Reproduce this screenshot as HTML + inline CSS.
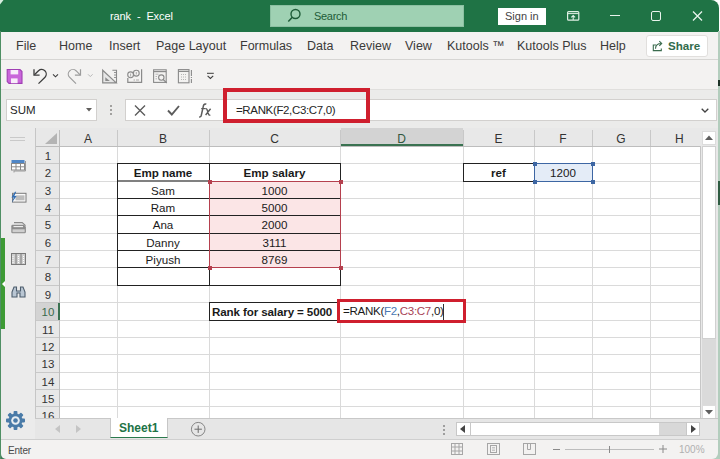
<!DOCTYPE html>
<html><head><meta charset="utf-8">
<style>
*{margin:0;padding:0;box-sizing:border-box}
html,body{width:720px;height:459px;overflow:hidden;background:#fff}
body{position:relative;font-family:"Liberation Sans",sans-serif;color:#262626}
.a{position:absolute}
.t{position:absolute;white-space:pre;line-height:1}
#title{left:0;top:0;width:719px;height:32px;background:#1f7345;border-top-right-radius:8px}
#ribbon{left:0;top:32px;width:718px;height:28px;background:#f3f2f1;border-bottom:1px solid #d6d5d3}
#qat{left:0;top:60px;width:718px;height:30px;background:#f3f2f1}
#fbar{left:0;top:90px;width:718px;height:38px;background:#ebebea}
.tab{font-size:12.5px;color:#3b3a39;top:40px}
.hl{position:absolute;height:1px;background:#dadada}
.vl{position:absolute;width:1px;background:#dadada}
.ch{font-size:12px;color:#333;top:132px}
.rh{font-size:11.5px;color:#333;width:24px;text-align:center}
.cell{font-size:11.6px;position:absolute;text-align:center;white-space:pre;line-height:17px;color:#1a1a1a;margin-top:0.4px}
.cell.b{font-size:11.6px;margin-top:0}
.b{font-weight:bold}
</style></head><body>
<!-- Title bar -->
<div id="title" class="a"></div>
<div class="t" style="left:110px;top:11px;font-size:11px;letter-spacing:-0.1px;color:#fff">rank  -  Excel</div>
<div class="a" style="left:270px;top:5px;width:194px;height:22px;background:#9fd1b3;border:1px solid #8cc0a2"></div>
<svg class="a" style="left:286px;top:8px" width="16" height="16" viewBox="0 0 16 16"><circle cx="9.5" cy="6" r="4.5" fill="none" stroke="#1e5c38" stroke-width="1.4"/><line x1="6.3" y1="9.3" x2="2.3" y2="13.5" stroke="#1e5c38" stroke-width="1.5"/></svg>
<div class="t" style="left:314px;top:11px;font-size:11px;letter-spacing:-0.3px;color:#1e5c38">Search</div>
<div class="a" style="left:498px;top:8px;width:48px;height:17px;background:#fff"></div>
<div class="t" style="left:505px;top:11px;font-size:11px;color:#444">Sign in</div>
<svg class="a" style="left:560px;top:5px" width="30" height="20" viewBox="560 5 30 20"><rect x="567.6" y="11.6" width="11.2" height="8.6" rx="1" fill="none" stroke="#dff0e4" stroke-width="1.2"/><path d="M567.6 13.6H578.8" stroke="#dff0e4" stroke-width="1"/><path d="M573.2 20V15.6M571.3 17.4L573.2 15.5L575.1 17.4" stroke="#dff0e4" stroke-width="1.1" fill="none"/></svg>
<div class="a" style="left:610px;top:15px;width:10px;height:1.3px;background:#e8f3ec"></div>
<div class="a" style="left:651px;top:11px;width:10px;height:10px;border:1.3px solid #e8f3ec;border-radius:2px"></div>
<svg class="a" style="left:692px;top:11px" width="11" height="10" viewBox="0 0 11 10"><path d="M1 0.5L10 9.5M10 0.5L1 9.5" stroke="#e8f3ec" stroke-width="1.3"/></svg>

<!-- Ribbon tabs -->
<div id="ribbon" class="a"></div>
<div class="t tab" style="left:16px">File</div>
<div class="t tab" style="left:59px">Home</div>
<div class="t tab" style="left:109px">Insert</div>
<div class="t tab" style="left:156px">Page Layout</div>
<div class="t tab" style="left:240px">Formulas</div>
<div class="t tab" style="left:307px">Data</div>
<div class="t tab" style="left:350px">Review</div>
<div class="t tab" style="left:405px">View</div>
<div class="t tab" style="left:447px">Kutools ™</div>
<div class="t tab" style="left:517px">Kutools Plus</div>
<div class="t tab" style="left:600px">Help</div>
<div class="a" style="left:646px;top:35px;width:62px;height:22px;background:#fff;border:1px solid #e1dfdd;border-radius:3px"></div>
<svg class="a" style="left:650px;top:38px" width="16" height="15" viewBox="650 38 16 15"><path d="M656 45H653.3V50.6H661.3V48.5" fill="none" stroke="#3a6b4e" stroke-width="1.1"/><path d="M655.5 48.8C655.5 45.5 657.5 43.5 661.5 43.5M659.3 41.2L661.7 43.5L659.3 45.8" fill="none" stroke="#3a6b4e" stroke-width="1.1"/></svg>
<div class="t b" style="left:668px;top:40px;font-size:11.6px;color:#326b4c">Share</div>

<!-- QAT -->
<div id="qat" class="a"></div>
<div class="a" style="left:0;top:89px;width:718px;height:1px;background:#e0dfdd"></div>
<svg class="a" style="left:0;top:60px" width="230" height="30" viewBox="0 60 230 30">
<path d="M7.2 69.5H20l2 2V83.4H9L7.2 81.6z" fill="#c965da" stroke="#9f3fb3" stroke-width="1.1"/>
<rect x="10.6" y="70" width="7.6" height="4.4" fill="#f8ecfa"/>
<rect x="11" y="78.4" width="6.6" height="4.8" fill="#f8ecfa"/>
<path d="M34 69.3V75.2H39.6" fill="none" stroke="#3d3d3d" stroke-width="1.3"/>
<path d="M34.4 74.8L38.5 70.7A4.6 4.6 0 0 1 45 77.2L38.5 83.6" fill="none" stroke="#3d3d3d" stroke-width="1.3"/>
<path d="M53 74.3L55.5 76.8L58 74.3" fill="none" stroke="#3d3d3d" stroke-width="1.1"/>
<path d="M80.5 69.3V75.2H74.9" fill="none" stroke="#9c9c9c" stroke-width="1.2"/>
<path d="M80.1 74.8L76 70.7A4.6 4.6 0 0 0 69.5 77.2L76 83.6" fill="none" stroke="#9c9c9c" stroke-width="1.2"/>
<path d="M88 74.3L90.3 76.6L92.6 74.3" fill="none" stroke="#b8b8b8" stroke-width="1"/>
<path d="M102.7 70.2L116.2 82.9H102.7z" fill="#e6e6e6" stroke="#8a8a8a" stroke-width="1.2"/>
<path d="M105.3 77.2L109.8 81H105.3z" fill="#8a8a8a"/>
<path d="M112.4 70.2H116.5V82.9" fill="none" stroke="#8a8a8a" stroke-width="1.1"/>
<path d="M114 72.5h2.4M114 75h2.4M114 77.5h2.4" stroke="#8a8a8a" stroke-width="0.9"/>
<path d="M127.8 78V82.3H141.6V69.3" fill="none" stroke="#8a8a8a" stroke-width="1.2"/>
<circle cx="130.6" cy="74.8" r="2.9" fill="none" stroke="#8a8a8a" stroke-width="1.1"/>
<circle cx="136.3" cy="73.2" r="2.9" fill="none" stroke="#8a8a8a" stroke-width="1.1"/>
<path d="M130.6 73.5v3M136.3 72v2.5M133.5 80h1.5M136 80h3" stroke="#9a9a9a" stroke-width="0.8"/>
<rect x="153.6" y="69.8" width="12.6" height="12.6" fill="none" stroke="#8a8a8a" stroke-width="1.1"/>
<path d="M153.6 71.6H166.2" stroke="#8a8a8a" stroke-width="1.2"/>
<circle cx="161.3" cy="77.6" r="2.7" fill="none" stroke="#8a8a8a" stroke-width="1.1"/>
<path d="M163.2 79.5L166.8 83" stroke="#8a8a8a" stroke-width="1.1"/>
<path d="M155.5 74.2h3M155.5 76.5h1.5M155.5 78.8h1.5" stroke="#a6a6a6" stroke-width="0.8"/>
<rect x="178.4" y="69.6" width="10.6" height="13.2" fill="none" stroke="#8a8a8a" stroke-width="1.1"/>
<path d="M178.4 71.4H189" stroke="#8a8a8a" stroke-width="1.2"/>
<path d="M181 74.5h6M181 77h6M181 79.5h6" stroke="#a6a6a6" stroke-width="0.8" stroke-dasharray="1 1"/>
<path d="M191.4 70V83" stroke="#8a8a8a" stroke-width="1.1" stroke-dasharray="6 1 1 1 4"/>
<path d="M207 73.3H213.8" stroke="#3d3d3d" stroke-width="1"/>
<path d="M207.6 75.9L210.4 78.5L213.2 75.9" fill="none" stroke="#3d3d3d" stroke-width="1.1"/>
</svg>


<!-- Formula bar -->
<div id="fbar" class="a"></div>
<div class="a" style="left:6px;top:99px;width:91px;height:22px;background:#fff;border:1px solid #d2d0ce"></div>
<div class="t" style="left:10px;top:105px;font-size:11.5px;color:#262626">SUM</div>
<svg class="a" style="left:86px;top:108px" width="6" height="4" viewBox="0 0 6 4"><path d="M0 0h6L3 3.5z" fill="#605e5c"/></svg>
<div class="a" style="left:110px;top:105px;width:2px;height:2px;background:#8a8886;border-radius:1px"></div>
<div class="a" style="left:110px;top:109px;width:2px;height:2px;background:#8a8886;border-radius:1px"></div>
<div class="a" style="left:110px;top:113px;width:2px;height:2px;background:#8a8886;border-radius:1px"></div>
<div class="a" style="left:125px;top:99px;width:592px;height:22px;background:#fff;border:1px solid #d2d0ce"></div>
<svg class="a" style="left:134px;top:105px" width="12" height="11" viewBox="0 0 12 11"><path d="M1 0.5l10 10M11 0.5l-10 10" stroke="#5c5c5c" stroke-width="1.4"/></svg>
<svg class="a" style="left:167px;top:105px" width="13" height="11" viewBox="0 0 13 11"><path d="M1 5.5l3.8 4L12 1" fill="none" stroke="#5c5c5c" stroke-width="1.9"/></svg>
<svg class="a" style="left:196px;top:100px" width="20" height="20" viewBox="196 100 20 20"><path d="M206.3 104.3c-1.3-0.6-2.5-0.1-2.9 1.5L201.3 115.2c-0.4 1.5-1.2 1.9-2.1 1.6" fill="none" stroke="#5c5c5c" stroke-width="1.5"/><path d="M201.2 108.6h3.8" stroke="#5c5c5c" stroke-width="1.2"/><path d="M205.3 108.8c0.8-0.4 1.4 0 1.7 0.8l1.6 4.6c0.3 0.8 0.9 1.1 1.7 0.7M210.6 108.8l-5 6.2" fill="none" stroke="#5c5c5c" stroke-width="1.4"/></svg>
<div class="a" style="left:223px;top:88px;width:147px;height:35px;border:4px solid #cf1f2e"></div>
<div class="t" style="left:236px;top:105px;font-size:11.5px;letter-spacing:-0.35px;color:#262626">=RANK(F2,C3:C7,0)</div>
<svg class="a" style="left:701px;top:108px" width="8" height="5" viewBox="0 0 8 5"><path d="M0.7 0.7l3.3 3.3 3.3-3.3" fill="none" stroke="#424242" stroke-width="1.3"/></svg>


<div class="a" style="left:1px;top:128px;width:34px;height:311px;background:#ebebeb"></div>
<div class="a" style="left:10px;top:137px;width:15px;height:1px;background:#c9c9c9"></div>
<div class="a" style="left:10px;top:140px;width:15px;height:1px;background:#c9c9c9"></div>
<div class="a" style="left:59px;top:146px;width:641px;height:272px;background:#fff"></div>
<div class="a" style="left:35px;top:128px;width:665px;height:18px;background:#e8e8e8"></div>
<div class="a" style="left:35px;top:146px;width:24px;height:272px;background:#e8e8e8"></div>
<div class="a" style="left:341px;top:128px;width:122px;height:18px;background:#d3d3d3"></div>
<div class="a" style="left:341px;top:144px;width:122px;height:2px;background:#3a7251"></div>
<div class="a" style="left:35px;top:303px;width:24px;height:17px;background:#d3d3d3"></div>
<div class="hl" style="left:59px;top:163px;width:641px;background:#dadada"></div>
<div class="hl" style="left:35px;top:163px;width:24px;background:#c8c8c8"></div>
<div class="hl" style="left:59px;top:181px;width:641px;background:#dadada"></div>
<div class="hl" style="left:35px;top:181px;width:24px;background:#c8c8c8"></div>
<div class="hl" style="left:59px;top:198px;width:641px;background:#dadada"></div>
<div class="hl" style="left:35px;top:198px;width:24px;background:#c8c8c8"></div>
<div class="hl" style="left:59px;top:215px;width:641px;background:#dadada"></div>
<div class="hl" style="left:35px;top:215px;width:24px;background:#c8c8c8"></div>
<div class="hl" style="left:59px;top:233px;width:641px;background:#dadada"></div>
<div class="hl" style="left:35px;top:233px;width:24px;background:#c8c8c8"></div>
<div class="hl" style="left:59px;top:250px;width:641px;background:#dadada"></div>
<div class="hl" style="left:35px;top:250px;width:24px;background:#c8c8c8"></div>
<div class="hl" style="left:59px;top:267px;width:641px;background:#dadada"></div>
<div class="hl" style="left:35px;top:267px;width:24px;background:#c8c8c8"></div>
<div class="hl" style="left:59px;top:285px;width:641px;background:#dadada"></div>
<div class="hl" style="left:35px;top:285px;width:24px;background:#c8c8c8"></div>
<div class="hl" style="left:59px;top:302px;width:641px;background:#dadada"></div>
<div class="hl" style="left:35px;top:302px;width:24px;background:#c8c8c8"></div>
<div class="hl" style="left:59px;top:320px;width:641px;background:#dadada"></div>
<div class="hl" style="left:35px;top:320px;width:24px;background:#c8c8c8"></div>
<div class="hl" style="left:59px;top:337px;width:641px;background:#dadada"></div>
<div class="hl" style="left:35px;top:337px;width:24px;background:#c8c8c8"></div>
<div class="hl" style="left:59px;top:354px;width:641px;background:#dadada"></div>
<div class="hl" style="left:35px;top:354px;width:24px;background:#c8c8c8"></div>
<div class="hl" style="left:59px;top:372px;width:641px;background:#dadada"></div>
<div class="hl" style="left:35px;top:372px;width:24px;background:#c8c8c8"></div>
<div class="hl" style="left:59px;top:389px;width:641px;background:#dadada"></div>
<div class="hl" style="left:35px;top:389px;width:24px;background:#c8c8c8"></div>
<div class="hl" style="left:59px;top:406px;width:641px;background:#dadada"></div>
<div class="hl" style="left:35px;top:406px;width:24px;background:#c8c8c8"></div>
<div class="vl" style="left:117px;top:146px;height:272px;background:#dadada"></div>
<div class="vl" style="left:117px;top:130px;height:16px;background:#c8c8c8"></div>
<div class="vl" style="left:209px;top:146px;height:272px;background:#dadada"></div>
<div class="vl" style="left:209px;top:130px;height:16px;background:#c8c8c8"></div>
<div class="vl" style="left:340px;top:146px;height:272px;background:#dadada"></div>
<div class="vl" style="left:340px;top:130px;height:16px;background:#c8c8c8"></div>
<div class="vl" style="left:463px;top:146px;height:272px;background:#dadada"></div>
<div class="vl" style="left:463px;top:130px;height:16px;background:#c8c8c8"></div>
<div class="vl" style="left:534px;top:146px;height:272px;background:#dadada"></div>
<div class="vl" style="left:534px;top:130px;height:16px;background:#c8c8c8"></div>
<div class="vl" style="left:592px;top:146px;height:272px;background:#dadada"></div>
<div class="vl" style="left:592px;top:130px;height:16px;background:#c8c8c8"></div>
<div class="vl" style="left:650px;top:146px;height:272px;background:#dadada"></div>
<div class="vl" style="left:650px;top:130px;height:16px;background:#c8c8c8"></div>
<div class="vl" style="left:700px;top:146px;height:272px;background:#dadada"></div>
<div class="vl" style="left:700px;top:130px;height:16px;background:#c8c8c8"></div>
<div class="a" style="left:35px;top:146px;width:665px;height:1px;background:#bdbdbd"></div>
<div class="a" style="left:35px;top:128px;width:1px;height:290px;background:#c6c6c6"></div>
<div class="a" style="left:59px;top:130px;width:1px;height:288px;background:#bdbdbd"></div>
<div class="a" style="left:58px;top:303px;width:2px;height:17px;background:#3a7251"></div>
<svg class="a" style="left:45px;top:133px" width="12" height="11" viewBox="0 0 12 11"><path d="M12 0V11H0z" fill="#b4b4b4"/></svg>
<div class="t" style="left:59px;width:58px;text-align:center;top:133px;font-size:12px;color:#333">A</div>
<div class="t" style="left:117px;width:92px;text-align:center;top:133px;font-size:12px;color:#333">B</div>
<div class="t" style="left:209px;width:131px;text-align:center;top:133px;font-size:12px;color:#333">C</div>
<div class="t" style="left:340px;width:123px;text-align:center;top:133px;font-size:12px;color:#32573f">D</div>
<div class="t" style="left:463px;width:71px;text-align:center;top:133px;font-size:12px;color:#333">E</div>
<div class="t" style="left:534px;width:58px;text-align:center;top:133px;font-size:12px;color:#333">F</div>
<div class="t" style="left:592px;width:58px;text-align:center;top:133px;font-size:12px;color:#333">G</div>
<div class="t" style="left:675px;top:133px;font-size:12px;color:#333">H</div>
<div class="t" style="left:36px;width:24px;text-align:center;top:151px;font-size:11.5px;color:#333">1</div>
<div class="t" style="left:36px;width:24px;text-align:center;top:168px;font-size:11.5px;color:#333">2</div>
<div class="t" style="left:36px;width:24px;text-align:center;top:186px;font-size:11.5px;color:#333">3</div>
<div class="t" style="left:36px;width:24px;text-align:center;top:203px;font-size:11.5px;color:#333">4</div>
<div class="t" style="left:36px;width:24px;text-align:center;top:220px;font-size:11.5px;color:#333">5</div>
<div class="t" style="left:36px;width:24px;text-align:center;top:238px;font-size:11.5px;color:#333">6</div>
<div class="t" style="left:36px;width:24px;text-align:center;top:255px;font-size:11.5px;color:#333">7</div>
<div class="t" style="left:36px;width:24px;text-align:center;top:272px;font-size:11.5px;color:#333">8</div>
<div class="t" style="left:36px;width:24px;text-align:center;top:290px;font-size:11.5px;color:#333">9</div>
<div class="t" style="left:36px;width:24px;text-align:center;top:307px;font-size:11.5px;color:#3a6a4c">10</div>
<div class="t" style="left:36px;width:24px;text-align:center;top:325px;font-size:11.5px;color:#333">11</div>
<div class="t" style="left:36px;width:24px;text-align:center;top:342px;font-size:11.5px;color:#333">12</div>
<div class="t" style="left:36px;width:24px;text-align:center;top:359px;font-size:11.5px;color:#333">13</div>
<div class="t" style="left:36px;width:24px;text-align:center;top:377px;font-size:11.5px;color:#333">14</div>
<div class="t" style="left:36px;width:24px;text-align:center;top:394px;font-size:11.5px;color:#333">15</div>
<div class="t" style="left:36px;width:24px;text-align:center;top:411px;font-size:11.5px;color:#333">16</div>
<div class="a" style="left:210px;top:181px;width:130px;height:86px;background:#fbe5e6"></div>
<div class="a" style="left:535px;top:164px;width:57px;height:17px;background:#e4ecf7"></div>
<div class="a" style="left:117px;top:163px;width:224px;height:1px;background:#222"></div>
<div class="a" style="left:117px;top:181px;width:224px;height:1px;background:#222"></div>
<div class="a" style="left:117px;top:198px;width:224px;height:1px;background:#222"></div>
<div class="a" style="left:117px;top:215px;width:224px;height:1px;background:#222"></div>
<div class="a" style="left:117px;top:233px;width:224px;height:1px;background:#222"></div>
<div class="a" style="left:117px;top:250px;width:224px;height:1px;background:#222"></div>
<div class="a" style="left:117px;top:267px;width:224px;height:1px;background:#222"></div>
<div class="a" style="left:117px;top:285px;width:224px;height:1px;background:#222"></div>
<div class="a" style="left:117px;top:163px;width:1px;height:123px;background:#222"></div>
<div class="a" style="left:209px;top:163px;width:1px;height:123px;background:#222"></div>
<div class="a" style="left:340px;top:163px;width:1px;height:123px;background:#222"></div>
<div class="a" style="left:463px;top:163px;width:72px;height:19px;border:1px solid #222"></div>
<div class="a" style="left:209px;top:302px;width:132px;height:19px;border:1px solid #222"></div>
<div class="a" style="left:118px;top:180px;width:91px;height:2px;background:#808080"></div>
<div class="a" style="left:209px;top:181px;width:132px;height:87px;border:1px solid #b5404e"></div>
<div class="a" style="left:208px;top:180px;width:4px;height:4px;background:#b5404e"></div>
<div class="a" style="left:339px;top:180px;width:4px;height:4px;background:#b5404e"></div>
<div class="a" style="left:208px;top:266px;width:4px;height:4px;background:#b5404e"></div>
<div class="a" style="left:339px;top:266px;width:4px;height:4px;background:#b5404e"></div>
<div class="a" style="left:534px;top:163px;width:59px;height:19px;border:1.5px solid #3d66a3"></div>
<div class="a" style="left:533px;top:162px;width:4px;height:4px;background:#3d66a3"></div>
<div class="a" style="left:591px;top:162px;width:4px;height:4px;background:#3d66a3"></div>
<div class="a" style="left:533px;top:180px;width:4px;height:4px;background:#3d66a3"></div>
<div class="a" style="left:591px;top:180px;width:4px;height:4px;background:#3d66a3"></div>
<div class="a" style="left:337px;top:299px;width:129px;height:24px;border:3px solid #cf1f2e;background:#fff"></div>
<div class="cell b" style="left:117px;width:92px;top:164px;">Emp name</div>
<div class="cell b" style="left:209px;width:131px;top:164px;">Emp salary</div>
<div class="cell" style="left:117px;width:92px;top:182px;">Sam</div>
<div class="cell" style="left:209px;width:131px;top:182px;">1000</div>
<div class="cell" style="left:117px;width:92px;top:199px;">Ram</div>
<div class="cell" style="left:209px;width:131px;top:199px;">5000</div>
<div class="cell" style="left:117px;width:92px;top:216px;">Ana</div>
<div class="cell" style="left:209px;width:131px;top:216px;">2000</div>
<div class="cell" style="left:117px;width:92px;top:234px;">Danny</div>
<div class="cell" style="left:209px;width:131px;top:234px;">3111</div>
<div class="cell" style="left:117px;width:92px;top:251px;">Piyush</div>
<div class="cell" style="left:209px;width:131px;top:251px;">8769</div>
<div class="cell b" style="left:463px;width:71px;top:164px;">ref</div>
<div class="cell" style="left:534px;width:58px;top:164px;">1200</div>
<div class="cell b" style="left:212px;top:303px;text-align:left;letter-spacing:-0.12px">Rank for salary = 5000</div>
<div class="cell" style="left:343px;top:303px;text-align:left;letter-spacing:-0.32px;margin-top:-0.6px">=RANK(<span style="color:#4a78b4">F2</span>,<span style="color:#a84456">C3:C7</span>,0)</div>
<div class="a" style="left:443px;top:304px;width:1px;height:16px;background:#333"></div>
<div class="a" style="left:700px;top:128px;width:18px;height:290px;background:#e8e8e8"></div>
<div class="a" style="left:700px;top:146px;width:1px;height:272px;background:#c6c6c6"></div>
<div class="a" style="left:702px;top:131px;width:14px;height:14px;background:#fff;border:1px solid #dcdcdc"></div>
<svg class="a" style="left:705px;top:135px" width="8" height="5" viewBox="0 0 8 5"><path d="M0 5L4 0.5L8 5z" fill="#5f5f5f"/></svg>
<div class="a" style="left:702px;top:146px;width:14px;height:259px;background:#dadada"></div>
<div class="a" style="left:702px;top:146px;width:14px;height:193px;background:#fff;border:1px solid #d0d0d0"></div>
<div class="a" style="left:702px;top:405px;width:14px;height:14px;background:#fff;border:1px solid #dcdcdc"></div>
<svg class="a" style="left:705px;top:410px" width="8" height="5" viewBox="0 0 8 5"><path d="M0 0L4 4.5L8 0z" fill="#5f5f5f"/></svg>
<div class="a" style="left:35px;top:418px;width:683px;height:21px;background:#e6e6e6;border-top:1px solid #c8c8c8"></div>
<svg class="a" style="left:55px;top:425px" width="5" height="8" viewBox="0 0 5 8"><path d="M5 0V8L0 4z" fill="#c4c4c4"/></svg>
<svg class="a" style="left:76px;top:425px" width="5" height="8" viewBox="0 0 5 8"><path d="M0 0V8L5 4z" fill="#c4c4c4"/></svg>
<div class="a" style="left:110px;top:418px;width:58px;height:20px;background:#fff;border-left:1px solid #c6c6c6;border-right:1px solid #c6c6c6;border-bottom:1.5px solid #2a7a4d"></div>
<div class="t b" style="left:119px;top:422px;font-size:12px;color:#217346">Sheet1</div>
<svg class="a" style="left:190px;top:421px" width="17" height="17" viewBox="0 0 17 17"><circle cx="8.2" cy="8.2" r="6.8" fill="none" stroke="#7a7a7a" stroke-width="0.9"/><path d="M8.2 4.5v7.4M4.5 8.2h7.4" stroke="#6a6a6a" stroke-width="1"/></svg>
<div class="a" style="left:443px;top:425px;width:2px;height:2px;background:#9e9e9e"></div>
<div class="a" style="left:443px;top:429px;width:2px;height:2px;background:#9e9e9e"></div>
<div class="a" style="left:443px;top:433px;width:2px;height:2px;background:#9e9e9e"></div>
<div class="a" style="left:456px;top:422px;width:244px;height:14px;background:#fff;border:1px solid #c8c8c8"></div>
<div class="a" style="left:470px;top:422px;width:1px;height:14px;background:#c8c8c8"></div>
<svg class="a" style="left:460px;top:425px" width="5" height="8" viewBox="0 0 5 8"><path d="M5 0V8L0 4z" fill="#444"/></svg>
<div class="a" style="left:659px;top:423px;width:28px;height:12px;background:#d8d8d8"></div>
<div class="a" style="left:686px;top:422px;width:1px;height:14px;background:#c8c8c8"></div>
<svg class="a" style="left:691px;top:425px" width="5" height="8" viewBox="0 0 5 8"><path d="M0 0V8L5 4z" fill="#444"/></svg>
<div class="a" style="left:0;top:450px;width:8px;height:9px;background:#3f7a57"></div>
<div class="a" style="left:712px;top:450px;width:8px;height:9px;background:#b3cdbd"></div>
<div class="a" style="left:1px;top:439px;width:717px;height:20px;background:#f3f2f1;border-top:1px solid #cfcfcf;border-bottom-left-radius:5px;border-bottom-right-radius:6px"></div>
<div class="t" style="left:8px;top:446px;font-size:10px;letter-spacing:-0.2px;color:#4a4a4a">Enter</div>
<svg class="a" style="left:451px;top:443px" width="12" height="12" viewBox="0 0 12 12"><rect x="0.5" y="0.5" width="11" height="11" fill="none" stroke="#a6a6a6"/><path d="M4 0.5v11M8 0.5v11M0.5 4h11M0.5 8h11" stroke="#a6a6a6"/></svg>
<svg class="a" style="left:487px;top:443px" width="13" height="12" viewBox="0 0 13 12"><rect x="0.5" y="0.5" width="12" height="11" fill="none" stroke="#a6a6a6"/><rect x="3.5" y="2.5" width="6" height="7" fill="none" stroke="#a6a6a6"/><path d="M5 4.5h3M5 6h3M5 7.5h3" stroke="#c6c6c6"/></svg>
<svg class="a" style="left:523px;top:443px" width="13" height="12" viewBox="0 0 13 12"><rect x="0.5" y="0.5" width="12" height="11" fill="none" stroke="#a6a6a6"/><path d="M4.5 0.5v6h3v-6" fill="none" stroke="#a6a6a6"/></svg>
<div class="a" style="left:553px;top:449px;width:7px;height:1px;background:#8a8a8a"></div>
<div class="a" style="left:565px;top:449px;width:89px;height:1px;background:#bdbdbd"></div>
<div class="a" style="left:609px;top:446px;width:1px;height:7px;background:#8a8a8a"></div>
<svg class="a" style="left:659px;top:445px" width="8" height="8" viewBox="0 0 8 8"><path d="M4 0v8M0 4h8" stroke="#8a8a8a"/></svg>
<div class="t" style="left:679px;top:445px;font-size:10px;color:#b0b0b0">100%</div>
<div class="a" style="left:1px;top:238px;width:4px;height:91px;background:#3d9a35"></div>
<svg class="a" style="left:2px;top:281px" width="3" height="6" viewBox="0 0 3 6"><path d="M3 0V6L0 3z" fill="#fff"/></svg>
<svg class="a" style="left:11px;top:159px" width="16" height="14" viewBox="0 0 16 14"><rect x="0.5" y="1" width="13" height="3.5" fill="#4f86c6"/><rect x="0.5" y="4.5" width="13" height="6.5" fill="#fff" stroke="#8a8a8a"/><path d="M5 4.5v6.5M9.5 4.5v6.5M0.5 7.8h13" stroke="#8a8a8a"/><path d="M14.5 2v10H3v1.5" fill="none" stroke="#9a9a9a"/></svg>
<svg class="a" style="left:11px;top:191px" width="16" height="13" viewBox="0 0 16 13"><rect x="1.5" y="2.3" width="13.5" height="8.8" fill="#fafafa" stroke="#7a7a7a"/><rect x="4.5" y="4.3" width="9" height="5" fill="#bcbcbc"/><path d="M4 0.8L0.4 6.5h2.3L0.8 11.8 5.6 5H3.4L5.2 0.8z" fill="#336fb5"/></svg>
<svg class="a" style="left:11px;top:221px" width="16" height="14" viewBox="0 0 16 14"><path d="M3 1.6H11.2L14.6 4.6" fill="none" stroke="#8a8a8a" stroke-width="1.1"/><path d="M1.5 3.8H13L14.9 5.8V10.8Q14.9 12.3 13.6 12.3H1.5Q0.3 12.3 0.3 10.8V5.2Q0.3 3.8 1.5 3.8z" fill="#8c8c8c"/><path d="M2.5 5.6H12" stroke="#f2f2f2" stroke-width="1.1"/><rect x="1.5" y="8.3" width="12.2" height="2.9" fill="#cfcfcf"/></svg>
<svg class="a" style="left:11px;top:253px" width="15" height="12" viewBox="0 0 15 12"><rect x="0.5" y="0.5" width="14" height="11" fill="#cfcfcf" stroke="#7a7a7a"/><path d="M5 0.5v11M10 0.5v11" stroke="#7a7a7a"/><path d="M2 3v7M7.5 3v7M12.5 3v7" stroke="#fff" stroke-dasharray="1 1"/></svg>
<svg class="a" style="left:11px;top:286px" width="15" height="12" viewBox="0 0 15 12"><path d="M1 11V6L3 1h2.5v4h4V1H12l2 5v5H9V7H6v4z" fill="#b9c6d3" stroke="#4d5d6d" stroke-width="1.1"/></svg>
<svg class="a" style="left:5px;top:410px" width="21" height="21" viewBox="0 0 21 21"><g fill="#4a7ba8"><circle cx="10.5" cy="10.5" r="7"/><rect x="8.6" y="1" width="3.8" height="4" rx="0.8" transform="rotate(0 10.5 10.5)"/><rect x="8.6" y="1" width="3.8" height="4" rx="0.8" transform="rotate(45 10.5 10.5)"/><rect x="8.6" y="1" width="3.8" height="4" rx="0.8" transform="rotate(90 10.5 10.5)"/><rect x="8.6" y="1" width="3.8" height="4" rx="0.8" transform="rotate(135 10.5 10.5)"/><rect x="8.6" y="1" width="3.8" height="4" rx="0.8" transform="rotate(180 10.5 10.5)"/><rect x="8.6" y="1" width="3.8" height="4" rx="0.8" transform="rotate(225 10.5 10.5)"/><rect x="8.6" y="1" width="3.8" height="4" rx="0.8" transform="rotate(270 10.5 10.5)"/><rect x="8.6" y="1" width="3.8" height="4" rx="0.8" transform="rotate(315 10.5 10.5)"/></g><circle cx="10.5" cy="10.5" r="4.3" fill="#e9eef2"/><circle cx="10.5" cy="10.5" r="2.3" fill="#4a7ba8"/></svg>
<svg class="a" style="left:0;top:0" width="4" height="5" viewBox="0 0 4 5"><path d="M0 0H3.5L0 4.5z" fill="#d8eee0"/></svg>
<div class="a" style="left:0;top:31px;width:1px;height:428px;background:#4f8f64"></div>
<div class="a" style="left:718px;top:31px;width:2px;height:421px;background:#b3cdbd"></div>
<div class="a" style="left:718px;top:80px;width:2px;height:6px;background:#1d3227"></div>
<div class="a" style="left:718px;top:181px;width:2px;height:24px;background:#2f5c42"></div>
</body></html>
